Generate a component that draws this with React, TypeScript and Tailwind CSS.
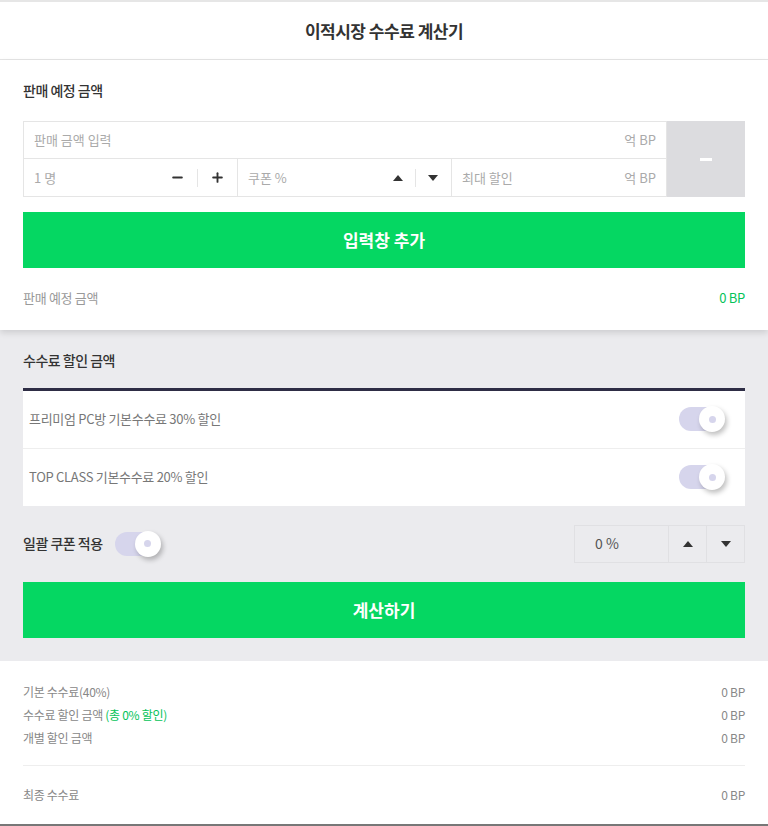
import { Minus, Plus } from "lucide-react";

const font = { fontFamily: '"Noto Sans CJK KR", "Noto Sans", sans-serif' };

function Toggle() {
  return (
    <div className="relative h-[24px] w-[46px]">
      <div className="absolute left-0 top-0 h-[24px] w-[40px] rounded-full bg-[#d6d5ec]" />
      <div className="absolute right-0 top-[-1px] flex h-[26px] w-[26px] items-center justify-center rounded-full bg-white shadow-[2px_3px_5px_rgba(0,0,0,0.25)]">
        <div className="h-[7px] w-[7px] rounded-full bg-[#d6d5ec]" />
      </div>
    </div>
  );
}

function TriUp() {
  return <span className="inline-block h-0 w-0 border-x-[5px] border-b-[6px] border-x-transparent border-b-[#333]" />;
}

function TriDown() {
  return <span className="inline-block h-0 w-0 border-x-[5px] border-t-[6px] border-x-transparent border-t-[#333]" />;
}

export default function App() {
  return (
    <div style={font} className="w-[768px] border-t-2 border-b-2 border-t-[#e6e6e6] border-b-[#777] bg-white text-[#333]">
      <header className="flex h-[58px] items-center justify-center border-b border-[#e5e5e5]">
        <h1 className="text-[17px] font-bold tracking-[-0.5px] text-[#333]">이적시장 수수료 계산기</h1>
      </header>

      <section className="relative z-10 bg-white px-[23px] pb-[22px] pt-[20px] shadow-[0_3px_6px_rgba(0,0,0,0.12)]">
        <h2 className="text-[14px] font-medium tracking-[-0.5px]">판매 예정 금액</h2>

        <div className="mt-[20px] flex">
          <div className="flex-1 border border-[#e5e5e5] text-[13px] text-[#aaa]">
            <div className="flex h-[37px] items-center justify-between border-b border-[#e5e5e5] px-[10px]">
              <span>판매 금액 입력</span>
              <span>억 BP</span>
            </div>
            <div className="grid h-[37px] grid-cols-3">
              <div className="flex items-center border-r border-[#e5e5e5] pl-[10px] pr-[12px]">
                <span className="flex-1">1 명</span>
                <Minus size={15} strokeWidth={3} className="text-[#333]" />
                <span className="mx-[12px] h-[18px] w-px bg-[#e5e5e5]" />
                <Plus size={15} strokeWidth={3} className="text-[#333]" />
              </div>
              <div className="flex items-center border-r border-[#e5e5e5] pl-[10px] pr-[13px]">
                <span className="flex-1">쿠폰 %</span>
                <TriUp />
                <span className="mx-[12px] h-[18px] w-px bg-[#e5e5e5]" />
                <TriDown />
              </div>
              <div className="flex items-center justify-between px-[10px]">
                <span>최대 할인</span>
                <span>억 BP</span>
              </div>
            </div>
          </div>
          <button className="flex w-[78px] items-center justify-center bg-[#dcdcdf]">
            <span className="h-[3px] w-[12px] bg-white" />
          </button>
        </div>

        <button className="mt-[15px] flex h-[56px] w-full items-center justify-center bg-[#05d762] text-[17px] font-bold text-white">
          입력창 추가
        </button>

        <div className="mt-[20px] flex items-center justify-between text-[13px] tracking-[-0.3px]">
          <span className="text-[#999]">판매 예정 금액</span>
          <span className="text-[#05c35a]">0 BP</span>
        </div>
      </section>

      <section className="bg-[#ebebee] px-[23px] pb-[23px] pt-[20px]">
        <h2 className="text-[14px] font-medium tracking-[-0.5px]">수수료 할인 금액</h2>

        <div className="mt-[17px] border-t-[3px] border-[#2e2d45] bg-white text-[13px] tracking-[-0.3px] text-[#777]">
          <div className="flex h-[58px] items-center justify-between border-b border-[#eeeeee] pl-[6px] pr-[20px]">
            <span>프리미엄 PC방 기본수수료 30% 할인</span>
            <Toggle />
          </div>
          <div className="flex h-[57px] items-center justify-between pl-[6px] pr-[20px]">
            <span>TOP CLASS 기본수수료 20% 할인</span>
            <Toggle />
          </div>
        </div>

        <div className="mt-[19px] flex h-[38px] items-center justify-between">
          <div className="flex items-center gap-[12px]">
            <span className="text-[14px] font-medium tracking-[-0.5px]">일괄 쿠폰 적용</span>
            <Toggle />
          </div>
          <div className="flex h-[38px] border border-[#e0e0e3] text-[14px] text-[#555]">
            <div className="flex w-[93px] items-center pl-[20px]">0 %</div>
            <button className="flex w-[38px] items-center justify-center border-l border-[#e0e0e3]">
              <TriUp />
            </button>
            <button className="flex w-[38px] items-center justify-center border-l border-[#e0e0e3]">
              <TriDown />
            </button>
          </div>
        </div>

        <button className="mt-[19px] flex h-[56px] w-full items-center justify-center bg-[#05d762] text-[17px] font-bold text-white">
          계산하기
        </button>
      </section>

      <section className="bg-white px-[23px] pb-[20px] pt-[22px] text-[12px] tracking-[-0.3px] text-[#888]">
        <div className="flex flex-col gap-[5px] pb-[18px]">
          <div className="flex justify-between">
            <span>기본 수수료(40%)</span>
            <span>0 BP</span>
          </div>
          <div className="flex justify-between">
            <span>
              수수료 할인 금액 <span className="text-[#05c35a]">(총 0% 할인)</span>
            </span>
            <span>0 BP</span>
          </div>
          <div className="flex justify-between">
            <span>개별 할인 금액</span>
            <span>0 BP</span>
          </div>
        </div>
        <div className="flex justify-between border-t border-[#eeeeee] pt-[20px]">
          <span>최종 수수료</span>
          <span>0 BP</span>
        </div>
      </section>
    </div>
  );
}
